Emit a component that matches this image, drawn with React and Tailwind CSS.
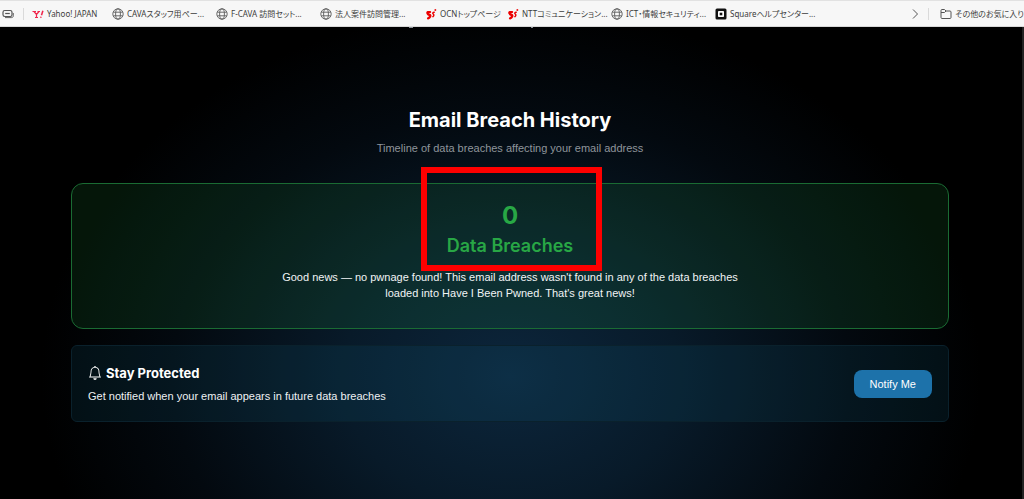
import { BsBell } from 'react-icons/bs'

const BOOKMARKS = [
  { label: 'Yahoo! JAPAN', icon: 'yahoo', width: 'w-[80px]' },
  { label: 'CAVAスタッフ用ペー...', icon: 'globe', width: 'w-[104px]' },
  { label: 'F-CAVA 訪問セット...', icon: 'globe', width: 'w-[104px]' },
  { label: '法人案件訪問管理...', icon: 'globe', width: 'w-[105px]' },
  { label: 'OCNトップページ', icon: 'ocn', width: 'w-[82px]' },
  { label: 'NTTコミュニケーション...', icon: 'ocn', width: 'w-[104px]' },
  { label: 'ICT・情報セキュリティ...', icon: 'globe', width: 'w-[104px]' },
  { label: 'Squareヘルプセンター...', icon: 'square', width: 'w-[100px]' },
]

function BookmarkIcon({ name }) {
  if (name === 'yahoo') {
    return (
      <svg viewBox="0 0 12 12" className="size-3 shrink-0" fill="none" stroke="#f0264c" aria-hidden="true">
        <path d="M.5 3.500h3.500M5.500 3.500H8M2 3.500l2.500 3L7 3.500M4.500 6.300v3M3 9.500h3" strokeWidth="1.200" />
        <path d="M10.900 2.800 9.500 7.200" strokeWidth="1.500" />
        <circle cx="8.900" cy="9.200" r=".5" fill="#f0264c" strokeWidth=".5" />
      </svg>
    )
  }
  if (name === 'ocn') {
    return (
      <svg viewBox="0 0 12 12" className="size-3 shrink-0" fill="none" stroke="#ec0000" strokeLinecap="round" strokeLinejoin="round" aria-hidden="true">
        <path d="M5.200 4H2.600c-.9.900-.1 2 .9 2.500" strokeWidth="2" />
        <path d="M3.500 6.300c1.500.4 2.200 1.200 1.600 2.300-.4.900-1.200 1.500-2 1.700" strokeWidth="2.400" />
        <path d="M9.200 4.300c-1.300.1-1.900.9-1 1.700.9.700.9 1.700-.3 2.600" strokeWidth="1.500" />
        <circle cx="10.200" cy="2" r=".5" fill="#ec0000" strokeWidth=".8" />
      </svg>
    )
  }
  if (name === 'square') {
    return (
      <svg viewBox="0 0 12 12" className="size-3 shrink-0" aria-hidden="true">
        <rect x=".5" y=".5" width="11" height="11" rx="1.500" fill="#111" />
        <rect x="3" y="3" width="6" height="6" rx=".8" fill="#fff" />
        <rect x="4.700" y="4.700" width="2.600" height="2.600" fill="#111" />
      </svg>
    )
  }
  return (
    <svg viewBox="0 0 12 12" className="size-3 shrink-0" fill="none" stroke="#5c5c5c" strokeWidth=".9" aria-hidden="true">
      <circle cx="6" cy="6" r="5.200" />
      <ellipse cx="6" cy="6" rx="2.400" ry="5.200" />
      <path d="M1.300 4.200h9.400M1.300 7.800h9.400" />
    </svg>
  )
}

function BookmarksBar() {
  return (
    <nav
      aria-label="Bookmarks"
      className="flex h-[27px] items-center border-t border-b border-t-[#e2e2e2] border-b-[#d8d8d8] bg-[#f7f7f7] pl-[2px] font-['Noto_Sans','Noto_Sans_CJK_JP',sans-serif] text-[8px] leading-4 text-[#3c3c3c] [font-feature-settings:'palt']"
    >
      <button type="button" aria-label="Tab actions" className="shrink-0">
        <svg viewBox="0 0 12 12" className="size-3" fill="none" stroke="#555" aria-hidden="true">
          <rect x="1" y="2.500" width="9" height="6" rx="1.800" strokeWidth="1.200" />
          <path d="M3.200 5.500h4.600" strokeWidth="1.200" />
          <path d="M3 9.600h6.500c1.200 0 1.800-.8 1.800-1.800V5" strokeWidth=".9" />
        </svg>
      </button>
      <span className="ml-[9px] h-3 w-px shrink-0 bg-[#dadada]" />
      <ul className="ml-2 flex min-w-0 flex-1 items-center overflow-hidden">
        {BOOKMARKS.map(b => (
          <li key={b.label} className={`shrink-0 ${b.width}`}>
            <a href="#" className="flex items-center gap-[3px] whitespace-nowrap">
              <BookmarkIcon name={b.icon} />
              {b.label}
            </a>
          </li>
        ))}
      </ul>
      <button type="button" aria-label="More bookmarks" className="shrink-0">
        <svg viewBox="0 0 12 12" className="size-3" fill="none" stroke="#555" aria-hidden="true">
          <path d="M4 1.500 8.500 6 4 10.500" />
        </svg>
      </button>
      <span className="ml-[7px] h-3 w-px shrink-0 bg-[#dadada]" />
      <button type="button" className="ml-[11px] flex shrink-0 items-center gap-[3px] whitespace-nowrap">
        <svg viewBox="0 0 12 12" className="size-3" fill="none" stroke="#555" aria-hidden="true">
          <path d="M1 9.500v-7c0-.6.400-1 1-1h2.500L6 3h4c.6 0 1 .4 1 1v5.500c0 .6-.4 1-1 1H2c-.6 0-1-.4-1-1zM1 4.500h3.500L6 3" />
        </svg>
        その他のお気に入り
      </button>
    </nav>
  )
}

export default function App() {
  return (
    <div className="flex min-h-screen flex-col bg-black font-['Liberation_Sans',Arial,sans-serif]">
      <BookmarksBar />
      <main className="relative flex-1 border-r-2 border-[#222] bg-[radial-gradient(ellipse_46%_78%_at_50%_74%,#0c263c_0%,#081a29_36%,#03090f_72%,#000_100%)] pt-[79px] pr-[73px] pb-[77px] pl-[71px]">
        {/* tail of the line scrolled under the bar */}
        <span className="absolute top-0 left-[40%] h-px w-1 bg-[#8f959b]" />
        <span className="absolute top-0 left-[52%] h-px w-[2px] bg-[#8f959b]" />

        <h2 className="text-center font-['Inter',sans-serif] text-[20px] leading-7 font-bold text-white">
          Email Breach History
        </h2>
        <p className="mt-[6px] text-center text-[11px] leading-4 text-[#8f959b]">
          Timeline of data breaches affecting your email address
        </p>

        <section className="mt-[27px] rounded-xl border border-[#1a6b33] bg-[#28a745]/13 px-4 pt-4 pb-[27px] text-center">
          <div className="relative mx-auto w-fit font-['Inter',sans-serif] text-[#28a745]">
            {/* highlight frame around the count */}
            <div className="pointer-events-none absolute -top-[33px] -right-[29px] -bottom-[11px] -left-[26px] border-6 border-[#fe0000]" />
            <p className="text-[24px] leading-8 font-bold">0</p>
            <h3 className="text-[18px] leading-7 font-semibold">Data Breaches</h3>
          </div>
          <p className="mx-auto mt-[9px] max-w-[480px] text-[11px] leading-4 text-[#f1f4f5]">
            Good news — no pwnage found! This email address wasn't found in any of the data breaches loaded into Have I
            Been Pwned. That's great news!
          </p>
        </section>

        <section className="mt-4 flex items-center justify-between rounded-md border border-[#0a212c] bg-[#17627f]/15 px-4 py-[17px]">
          <div>
            <h3 className="flex items-center gap-1 font-['Inter',sans-serif] text-[13px] leading-5 font-bold text-white">
              <BsBell className="size-[14px]" aria-hidden="true" />
              Stay Protected
            </h3>
            <p className="mt-[5px] text-[11px] leading-4 text-[#eef1f3]">
              Get notified when your email appears in future data breaches
            </p>
          </div>
          <button type="button" className="rounded-lg bg-[#1d72aa] px-4 py-[6px] text-[11px] leading-4 font-medium text-white">
            Notify Me
          </button>
        </section>
      </main>
    </div>
  )
}
